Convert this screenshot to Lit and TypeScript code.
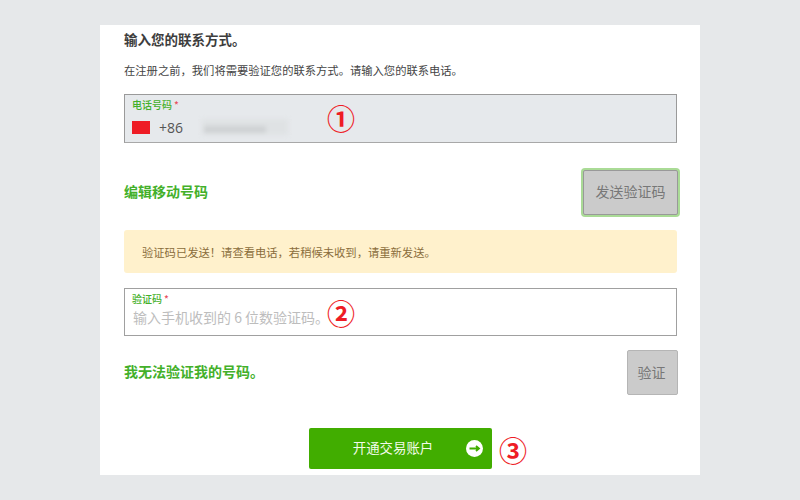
import { LitElement, html, css } from "lit";
import { customElement } from "lit/decorators.js";

@customElement("app-root")
export class AppRoot extends LitElement {
  static styles = css`
    :host {
      display: block;
      width: 800px;
      height: 500px;
      box-sizing: border-box;
      padding: 25px 100px;
      background: #e6e8ea;
      font-family: "Noto Sans CJK SC", "Liberation Sans", sans-serif;
      overflow: hidden;
    }
    .card {
      height: 450px;
      box-sizing: border-box;
      background: #fff;
      padding: 5px 23px 0 24px;
      display: flex;
      flex-direction: column;
    }
    h1 {
      margin: 0;
      font-size: 13.5px;
      line-height: 18px;
      font-weight: 700;
      color: #3d3d3d;
    }
    .desc {
      margin: 14px 0 0;
      font-size: 11.3px;
      line-height: 16px;
      color: #444;
    }
    .field {
      position: relative;
      box-sizing: border-box;
      height: 49px;
      margin-top: 16px;
      border: 1px solid #9a9a9a;
      border-bottom-color: #a8a8a8;
      padding: 3px 7px 0;
      background: #fff;
    }
    .field.locked {
      background: #e6e9ec;
    }
    .field.code {
      margin-top: 15px;
      height: 48px;
      border-width: 1.5px;
      border-color: #a0a0a0;
    }
    .label {
      font-size: 10px;
      line-height: 14px;
      color: #43b02a;
      font-weight: 500;
    }
    .label i {
      color: #e8505b;
      font-style: normal;
      margin-left: 2px;
    }
    .phone {
      display: flex;
      align-items: center;
      height: 20px;
      margin-top: 5px;
      font-family: "Open Sans", "Liberation Sans", sans-serif;
      font-size: 14px;
      color: #555;
    }
    .flag {
      width: 18px;
      height: 13px;
      background: #ee1c25;
      margin-right: 9px;
    }
    .smear {
      position: relative;
      width: 86px;
      height: 16px;
      margin-left: 19px;
      background: #dfe2e4;
      filter: blur(2px);
    }
    .smear::after {
      content: "";
      position: absolute;
      left: 2px;
      right: 22px;
      top: 7px;
      height: 7px;
      background: #cfd2d4;
    }
    .placeholder {
      margin-top: 1px;
      padding-left: 1px;
      font-size: 14px;
      line-height: 20px;
      color: #bdbdbd;
    }
    .mark {
      position: absolute;
      font-size: 28px;
      line-height: 28px;
      color: #ee1c25;
      font-family: "Noto Sans CJK SC", sans-serif;
      font-weight: 700;
    }
    .mark.one {
      left: 202px;
      top: 9px;
    }
    .mark.two {
      left: 202px;
      top: 10px;
    }
    .row {
      display: flex;
      align-items: center;
      justify-content: space-between;
    }
    .row.edit {
      margin-top: 25px;
      height: 49px;
      margin-right: -1px;
    }
    .row.verify {
      margin-top: 14px;
      height: 45px;
      margin-right: -1px;
    }
    .link {
      padding-bottom: 3px;
      font-size: 14px;
      font-weight: 700;
      color: #43b02a;
    }
    .send {
      box-sizing: border-box;
      width: 95px;
      height: 45px;
      border: 1.5px solid #999;
      box-shadow: 0 0 0 2px #aadb96;
      border-radius: 2px;
      background: #cbcbcb;
      color: #777;
      font: inherit;
      font-size: 14px;
      padding: 0 0 3px;
    }
    .verify-btn {
      box-sizing: border-box;
      width: 51px;
      height: 45px;
      border: 1px solid #b5b5b5;
      border-radius: 2px;
      background: #cbcbcb;
      color: #777;
      font: inherit;
      font-size: 14px;
      padding: 0 2px 2px 0;
    }
    .alert {
      box-sizing: border-box;
      height: 43px;
      margin-top: 13px;
      padding: 0 18px;
      display: flex;
      align-items: center;
      background: #fff1cc;
      border-radius: 3px;
      font-size: 11.3px;
      color: #8a6d3b;
    }
    .cta-row {
      position: relative;
      display: flex;
      justify-content: center;
      margin-top: 33px;
      margin-right: 1px;
    }
    .cta {
      position: relative;
      box-sizing: border-box;
      width: 183px;
      height: 41px;
      border: 0;
      border-radius: 2px;
      background: #41ad00;
      color: #f2fbe9;
      font: inherit;
      font-size: 13.4px;
      padding: 0 14px 3px 0;
      display: flex;
      align-items: center;
      justify-content: center;
    }
    .cta svg {
      position: absolute;
      right: 9px;
      top: 12px;
    }
    .mark.three {
      left: 375px;
      top: 8px;
    }
  `;

  render() {
    return html`
      <div class="card">
        <h1>输入您的联系方式。</h1>
        <p class="desc">在注册之前，我们将需要验证您的联系方式。请输入您的联系电话。</p>

        <div class="field locked">
          <div class="label">电话号码<i>*</i></div>
          <div class="phone">
            <span class="flag"></span>
            <span>+86</span>
            <span class="smear"></span>
          </div>
          <span class="mark one">①</span>
        </div>

        <div class="row edit">
          <span class="link">编辑移动号码</span>
          <button class="send">发送验证码</button>
        </div>

        <div class="alert">验证码已发送！请查看电话，若稍候未收到，请重新发送。</div>

        <div class="field code">
          <div class="label">验证码<i>*</i></div>
          <div class="placeholder">输入手机收到的 6 位数验证码。</div>
          <span class="mark two">②</span>
        </div>

        <div class="row verify">
          <span class="link">我无法验证我的号码。</span>
          <button class="verify-btn">验证</button>
        </div>

        <div class="cta-row">
          <button class="cta">
            开通交易账户
            <svg width="17" height="17" viewBox="0 0 17 17">
              <circle cx="8.5" cy="8.5" r="8.5" fill="#fff" />
              <path d="M3.5 8.5H12.5M10 6L13 8.5L10 11" fill="none" stroke="#41ad00" stroke-width="1.8" />
            </svg>
          </button>
          <span class="mark three">③</span>
        </div>
      </div>
    `;
  }
}
